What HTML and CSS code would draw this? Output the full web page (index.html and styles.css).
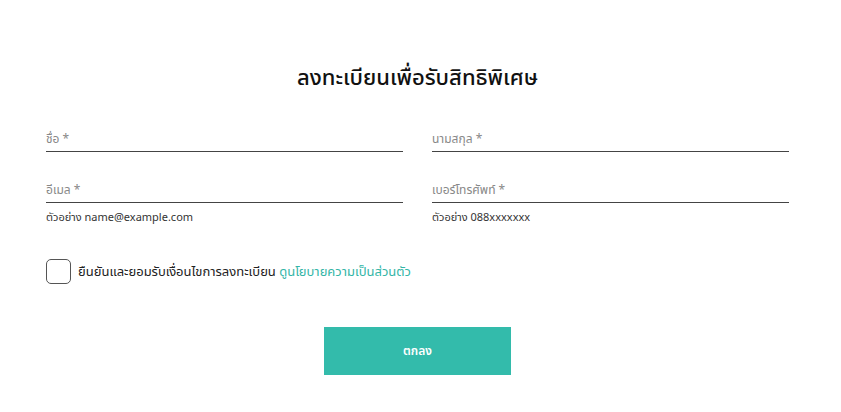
FILE: index.html
```html
<!DOCTYPE html>
<html lang="th">
<head>
<meta charset="utf-8">
<link rel="stylesheet" href="styles.css">
</head>
<body>
<main class="page">
  <h1 class="title">ลงทะเบียนเพื่อรับสิทธิพิเศษ</h1>
  <form class="form">
    <div class="grid">
      <div class="field">
        <div class="input">ชื่อ *</div>
      </div>
      <div class="field">
        <div class="input">นามสกุล *</div>
      </div>
      <div class="field">
        <div class="input">อีเมล *</div>
        <div class="hint">ตัวอย่าง name@example.com</div>
      </div>
      <div class="field">
        <div class="input">เบอร์โทรศัพท์ *</div>
        <div class="hint">ตัวอย่าง 088xxxxxxx</div>
      </div>
    </div>
    <label class="consent">
      <span class="box"></span>
      <span class="consent-text">ยืนยันและยอมรับเงื่อนไขการลงทะเบียน <a class="link">ดูนโยบายความเป็นส่วนตัว</a></span>
    </label>
    <div class="actions">
      <button type="button" class="submit">ตกลง</button>
    </div>
  </form>
</main>
</body>
</html>
```
FILE: styles.css
```css
* { box-sizing: border-box; }
html, body { margin: 0; background: #fff; }
body {
  font-family: "Noto Sans Thai", "Noto Sans", "DejaVu Sans", sans-serif;
  color: #222;
}
.page {
  width: 743px;
  margin-left: 46px;
  padding-top: 62px;
}
.title {
  margin: 0;
  text-align: center;
  font-size: 22px;
  font-weight: 500;
  line-height: 34px;
  color: #111;
}
.form { margin-top: 26px; }
.grid {
  display: grid;
  grid-template-columns: 357px 357px;
  column-gap: 29px;
  row-gap: 0;
}
.field { height: 51px; }
.input {
  height: 30px;
  border-bottom: 1px solid #444;
  font-size: 12px;
  line-height: 20px;
  padding-top: 7px;
  color: #888;
}
.hint {
  font-size: 11px;
  line-height: 14px;
  margin-top: 8px;
  color: #333;
}
.consent {
  display: flex;
  align-items: center;
  gap: 7px;
  margin-top: 35px;
  font-size: 13px;
  color: #222;
}
.box {
  width: 25px;
  height: 25px;
  border: 1px solid #555;
  border-radius: 5px;
}
.link { color: #33b5a6; }
.actions {
  display: flex;
  justify-content: center;
  margin-top: 43px;
}
.submit {
  width: 187px;
  height: 48px;
  border: 0;
  background: #33bbab;
  color: #fff;
  font-family: inherit;
  font-size: 12px;
  font-weight: 600;
}
```
